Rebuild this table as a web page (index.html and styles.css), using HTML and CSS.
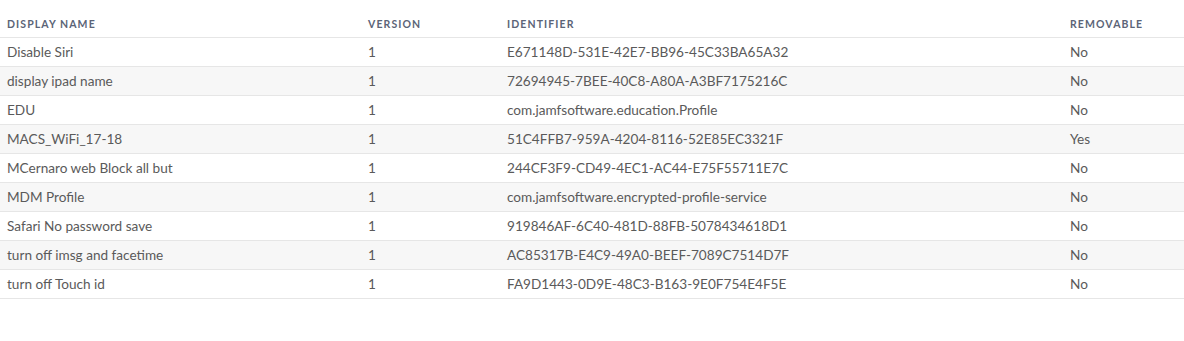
FILE: index.html
```html
<!DOCTYPE html>
<html>
<head>
<meta charset="utf-8">
<link rel="stylesheet" href="styles.css">
</head>
<body>
<table class="profiles">
  <colgroup>
    <col class="c-name"><col class="c-ver"><col class="c-id"><col class="c-rem">
  </colgroup>
  <thead>
    <tr><th>Display Name</th><th>Version</th><th>Identifier</th><th>Removable</th></tr>
  </thead>
  <tbody>
    <tr><td>Disable Siri</td><td>1</td><td>E671148D-531E-42E7-BB96-45C33BA65A32</td><td>No</td></tr>
    <tr><td>display ipad name</td><td>1</td><td>72694945-7BEE-40C8-A80A-A3BF7175216C</td><td>No</td></tr>
    <tr><td>EDU</td><td>1</td><td>com.jamfsoftware.education.Profile</td><td>No</td></tr>
    <tr><td>MACS_WiFi_17-18</td><td>1</td><td>51C4FFB7-959A-4204-8116-52E85EC3321F</td><td>Yes</td></tr>
    <tr><td>MCernaro web Block all but</td><td>1</td><td>244CF3F9-CD49-4EC1-AC44-E75F55711E7C</td><td>No</td></tr>
    <tr><td>MDM Profile</td><td>1</td><td>com.jamfsoftware.encrypted-profile-service</td><td>No</td></tr>
    <tr><td>Safari No password save</td><td>1</td><td>919846AF-6C40-481D-88FB-5078434618D1</td><td>No</td></tr>
    <tr><td>turn off imsg and facetime</td><td>1</td><td>AC85317B-E4C9-49A0-BEEF-7089C7514D7F</td><td>No</td></tr>
    <tr><td>turn off Touch id</td><td>1</td><td>FA9D1443-0D9E-48C3-B163-9E0F754E4F5E</td><td>No</td></tr>
  </tbody>
</table>
</body>
</html>
```
FILE: styles.css
```css
html, body {
  margin: 0;
  padding: 0;
  background: #ffffff;
}
body {
  font-family: "Lato", "Open Sans", sans-serif;
}
.profiles {
  width: 100%;
  border-collapse: collapse;
  table-layout: fixed;
}
.c-name { width: 361px; }
.c-ver { width: 139px; }
.c-id { width: 563px; }
.c-rem { width: auto; }
.profiles th {
  text-align: left;
  font-size: 10.5px;
  font-weight: 700;
  letter-spacing: 1.1px;
  text-transform: uppercase;
  color: #5b6477;
  padding: 19px 7px 7px;
  height: 11px;
  line-height: 11px;
  border-bottom: 1px solid #e6e6e6;
}
.profiles td {
  font-size: 13.6px;
  color: #5a5a5a;
  padding: 0 7px;
  height: 28px;
  line-height: 28px;
  border-bottom: 1px solid #e6e6e6;
  white-space: nowrap;
}
.profiles tbody tr:nth-child(even) td {
  background: #f7f7f7;
}
```
